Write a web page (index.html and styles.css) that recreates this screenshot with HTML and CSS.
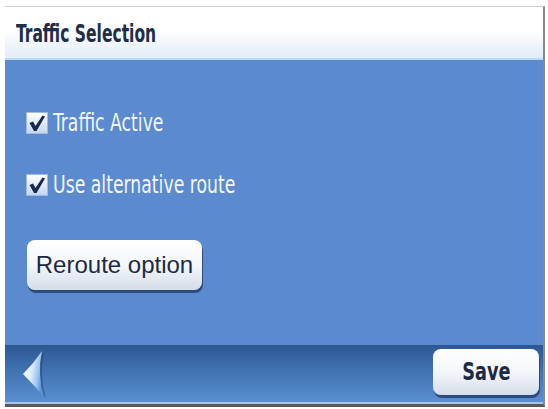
FILE: index.html
```html
<!DOCTYPE html>
<html>
<head>
<meta charset="utf-8">
<link rel="stylesheet" href="styles.css">
</head>
<body>
<div class="screen">
  <div class="header"><span class="title">Traffic Selection</span></div>
  <div class="content">
    <div class="option">
      <span class="check"><svg viewBox="0 0 20 20" width="20" height="20"><path d="M2.5 10 L6 8.5 L8.5 13 L15.5 2.5 L18 3.5 L9.5 18 L7 18 Z" fill="#1a2850"/></svg></span>
      <span class="label">Traffic Active</span>
    </div>
    <div class="option">
      <span class="check"><svg viewBox="0 0 20 20" width="20" height="20"><path d="M2.5 10 L6 8.5 L8.5 13 L15.5 2.5 L18 3.5 L9.5 18 L7 18 Z" fill="#1a2850"/></svg></span>
      <span class="label">Use alternative route</span>
    </div>
    <button class="btn reroute">Reroute option</button>
  </div>
  <div class="footer">
    <span class="back"><svg viewBox="0 0 26 48" width="26" height="48">
      <defs>
        <linearGradient id="ag" x1="0" y1="0" x2="1" y2="0.3">
          <stop offset="0" stop-color="#ffffff"/>
          <stop offset="0.5" stop-color="#dcebfb"/>
          <stop offset="0.8" stop-color="#98c3f2"/>
          <stop offset="1" stop-color="#5a92d6"/>
        </linearGradient>
      </defs>
      <path d="M2 24 Q13 13 21 1 Q16 24 23 47 Q13 35 2 24 Z" fill="#1f3a66" opacity="0.45" transform="translate(2,1)"/>
      <path d="M2 24 Q13 13 21 1 Q16 24 23 47 Q13 35 2 24 Z" fill="url(#ag)"/>
    </svg></span>
    <button class="btn save"><span class="save-text">Save</span></button>
  </div>
</div>
</body>
</html>
```
FILE: styles.css
```css
html, body {
  margin: 0;
  padding: 0;
  background: #ffffff;
}
body {
  width: 548px;
  height: 409px;
  overflow: hidden;
}
.screen {
  margin: 6px 0 0 5px;
  width: 538px;
  border-top: 1px solid #cfcfcf;
  border-right: 2px solid #8a8a8a;
  border-bottom: 3px solid #5a5a5a;
  display: flex;
  flex-direction: column;
}
.header {
  height: 51px;
  background: linear-gradient(#ffffff 0%, #ffffff 45%, #e1ebf7 100%);
  border-bottom: 2px solid #b9ddf4;
  display: flex;
  align-items: center;
  padding-left: 11px;
}
.title {
  display: inline-block;
  font-family: "DejaVu Sans", sans-serif;
  font-stretch: condensed;
  font-weight: bold;
  font-size: 24px;
  color: #1e2d48;
  margin-top: 2px;
  transform: scaleX(0.72);
  transform-origin: left center;
}
.content {
  height: 285px;
  background: #5b8ace;
  padding: 52px 0 0 22px;
  box-sizing: border-box;
  display: flex;
  flex-direction: column;
  align-items: flex-start;
}
.option {
  display: flex;
  align-items: center;
  gap: 6px;
  height: 22px;
  margin-bottom: 40px;
}
.check {
  width: 20px;
  height: 20px;
  background: linear-gradient(#ffffff, #c4d6ee);
  box-shadow: 0 0 0 1px #9fbbe0;
  display: flex;
  align-items: center;
  justify-content: center;
}
.label {
  display: inline-block;
  font-family: "DejaVu Sans", sans-serif;
  font-stretch: condensed;
  font-size: 24px;
  color: #f2f6fb;
  transform: scaleX(0.8);
  transform-origin: left center;
}
.btn {
  border: none;
  border-radius: 8px;
  background: linear-gradient(#ffffff 0%, #f4f6fa 50%, #d5ddea 100%);
  box-shadow: 1px 3px 0 #2c4c7e, 0 0 1px #5a7aa8;
  color: #1c2a45;
  padding: 0;
}
.reroute {
  margin-top: 4px;
  width: 175px;
  height: 50px;
  font-family: "Liberation Sans", sans-serif;
  font-size: 24px;
}
.footer {
  height: 57px;
  background: linear-gradient(#2c5792 0%, #3a6aa8 30%, #5b8fd1 100%);
  border-bottom: 2px solid #a8c2e0;
  display: flex;
  align-items: center;
  justify-content: space-between;
  padding: 0 4px 0 16px;
}
.back {
  display: flex;
}
.save {
  width: 106px;
  height: 46px;
  margin-bottom: 4px;
  display: flex;
  align-items: center;
  justify-content: center;
}
.save-text {
  display: inline-block;
  font-family: "DejaVu Sans", sans-serif;
  font-stretch: condensed;
  font-weight: bold;
  font-size: 24px;
  color: #1c2a45;
  transform: scaleX(0.82);
}
```
